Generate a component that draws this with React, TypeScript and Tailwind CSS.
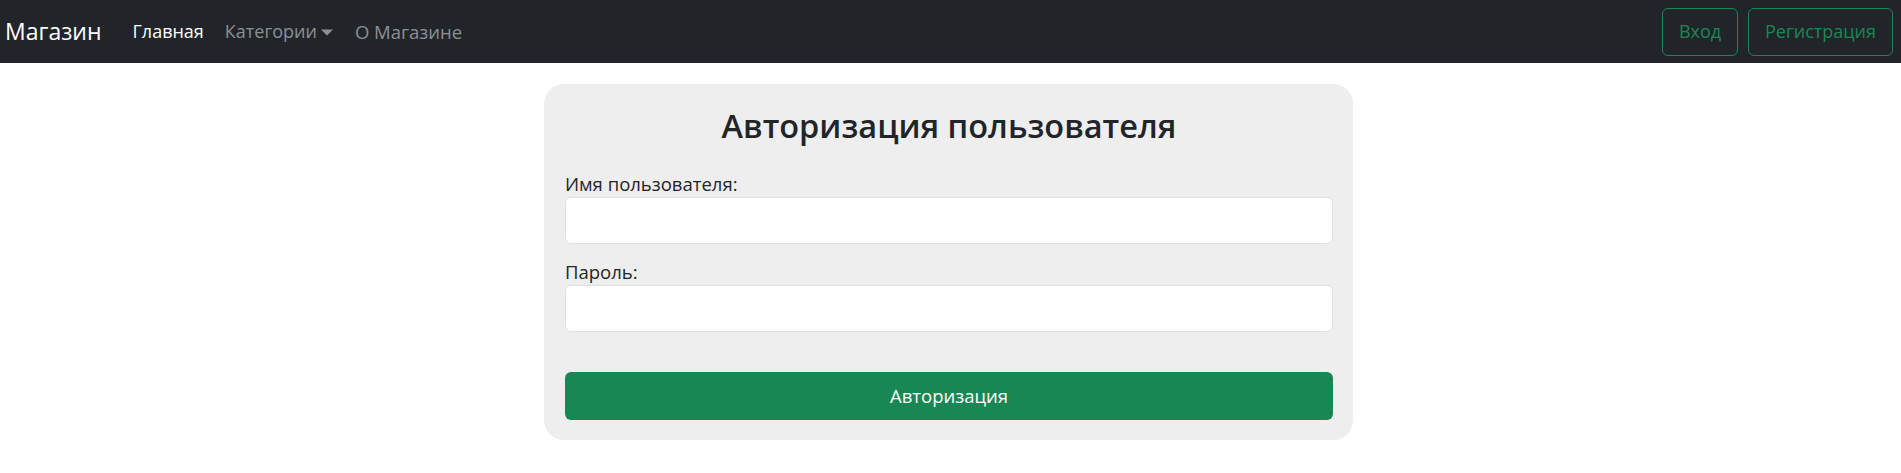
import React from "react";

export default function App() {
  const font = { fontFamily: '"Open Sans", "Noto Sans", sans-serif' };
  return (
    <div className="min-h-[473px] bg-white" style={font}>
      <nav className="flex h-[63px] items-center justify-between bg-[#212529] pl-[5px] pr-[8px]">
        <div className="flex items-center">
          <span className="text-[23px] leading-none text-white">Магазин</span>
          <div className="ml-[31px] flex items-center text-[18px]">
            <a className="text-white">Главная</a>
            <a className="ml-[21px] flex items-center text-[#8c8f93]">
              Категории
              <svg className="ml-[4px]" width="12" height="8" viewBox="0 0 12 8">
                <path d="M0 1.5 L12 1.5 L6 7.5 Z" fill="#8c8f93" />
              </svg>
            </a>
            <a className="ml-[22px] text-[18.5px] text-[#8c8f93]">О Магазине</a>
          </div>
        </div>
        <div className="flex items-center gap-[10px]">
          <button className="h-[48px] w-[76px] rounded-[6px] border border-[#198754] text-[18px] text-[#198754]">
            Вход
          </button>
          <button className="h-[48px] w-[145px] rounded-[6px] border border-[#198754] text-[18px] text-[#198754]">
            Регистрация
          </button>
        </div>
      </nav>

      <div className="mx-auto mt-[21px] w-[809px] -translate-x-[2px] rounded-[20px] bg-[#eeeeee] pb-[20px] pl-[21px] pr-[20px] pt-[20px]">
        <h2 className="text-center text-[32.5px] font-semibold leading-[43px] text-[#212529]">
          Авторизация пользователя
        </h2>
        <div className="mt-[23px]">
          <label className="block text-[18.5px] leading-[27px] text-[#212529]">Имя пользователя:</label>
          <div className="h-[47px] rounded-[6px] border border-[#dee2e6] bg-white" />
        </div>
        <div className="mt-[14px]">
          <label className="block text-[18.5px] leading-[27px] text-[#212529]">Пароль:</label>
          <div className="h-[47px] rounded-[6px] border border-[#dee2e6] bg-white" />
        </div>
        <button className="mt-[40px] flex h-[48px] w-full items-center justify-center rounded-[6px] bg-[#198754] text-[18.5px] text-white">
          Авторизация
        </button>
      </div>
    </div>
  );
}
